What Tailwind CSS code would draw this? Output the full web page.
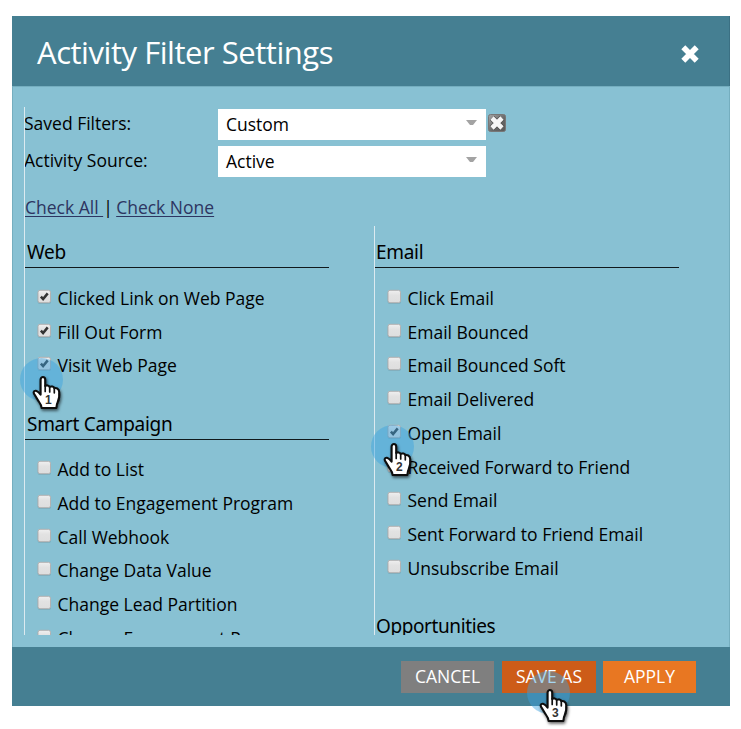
<!DOCTYPE html>
<html lang="en">
<head>
<meta charset="utf-8">
<title>Activity Filter Settings</title>
<script src="https://cdn.jsdelivr.net/npm/@tailwindcss/browser@4"></script>
</head>
<body class="bg-white overflow-hidden font-['Open_Sans',sans-serif] text-black">
<svg class="absolute size-0">
  <defs>
    <linearGradient id="boxFill" x1="0" y1="0" x2="0" y2="1"><stop offset="0" stop-color="#f0f0f0"/><stop offset=".4" stop-color="#e2e2e2"/><stop offset="1" stop-color="#dedede"/></linearGradient>
    <linearGradient id="clearFill" x1="0" y1="0" x2="1" y2="1"><stop offset="0" stop-color="#a5a5a5"/><stop offset=".6" stop-color="#666"/><stop offset="1" stop-color="#5a5a5a"/></linearGradient>
    <filter id="handShadow" x="-30%" y="-20%" width="180%" height="160%"><feDropShadow dx="1" dy="1.8" stdDeviation="1.4" flood-color="#000" flood-opacity=".6"/></filter>
    <symbol id="box" viewBox="0 0 15 16">
      <rect x=".6" y="2" width="13.400" height="13" rx="2.5" fill="#5c8c9c" opacity=".35"/>
      <rect x="1" y="1.300" width="12.500" height="12.400" rx="2" fill="url(#boxFill)" stroke="#b3b1b1"/>
    </symbol>
    <symbol id="tick" viewBox="0 0 15 16"><path d="M3.900 7.600 6.100 10.100 10.700 4.400" fill="none" stroke="currentColor" stroke-width="2.500"/></symbol>
    <symbol id="hand" viewBox="0 0 40 42">
      <path filter="url(#handShadow)" d="M9.600 6.600C9.600 3.200 14.200 3.200 14.200 6.600V13C15.200 12 18 12.200 18.600 14 20 13 22.800 13.500 23.300 15.200 25.300 14.500 28 16 28.200 19 28.600 23 28.200 26.500 26.600 29.500 25.800 31 25.500 33 25.300 35H10.600C10.400 31.800 8.800 29.800 7.200 27.600 5.500 25.200 4.500 22.800 2.900 20.600 2 18.600 3.800 17.200 5.600 18 7.200 18.600 8.400 20 9.600 21.600Z" fill="#fff" stroke="#0c0c0c" stroke-width="2.100" stroke-linejoin="round"/>
      <path d="M14.200 12.500v6M18.700 14v5M23.300 15.500v4.300" stroke="#111" stroke-width="1.700" stroke-linecap="round"/>
    </symbol>
  </defs>
</svg>
<div class="relative w-[741px] h-[729px] pt-4 pl-3">
  <div class="w-[718px] h-[690px] flex flex-col bg-[#88c1d3]">
    <header class="h-[70px] flex shrink-0 items-center justify-between bg-[#457f92] pl-[25px] pr-[29px] border-r border-[#3b7083]">
      <h1 class="text-[31px] leading-[40px] tracking-[-0.46px] text-white whitespace-nowrap pt-px">Activity Filter Settings</h1>
      <svg class="w-5 h-5 mt-[6px]" viewBox="0 0 20 20"><path d="M3.300 3.300 16.700 16.700M16.700 3.300 3.300 16.700" stroke="#fff" stroke-width="5.600"/></svg>
    </header>
    <main class="h-[561px] shrink-0 border-t border-x border-[#75aebf] pt-5 pl-[11px]">
      <div class="h-[528px] border-l border-[#dceaf0] overflow-hidden text-[17.5px] leading-[24px] whitespace-nowrap">
        <div class="flex pt-[2px] h-[33px]">
          <div class="w-[193px] pt-[2px]"><span class="-ml-px">Saved Filters:</span></div>
          <div class="w-[268px] h-[31px] bg-white flex justify-between pl-2 pr-[9px] pt-[3px]"><span>Custom</span><svg class="w-[11px] h-[6px] mt-[8px]" viewBox="0 0 11 6"><path d="M0 0h11L7 5H4z" fill="#a3a3a3"/></svg></div>
          <svg class="w-[18px] h-[18px] ml-[2px] mt-[5px]" viewBox="0 0 18 18"><rect x=".5" y=".5" width="17" height="17" rx="2" fill="url(#clearFill)" stroke="#777"/><path d="M4 4 14 14M14 4 4 14" stroke="#444" stroke-width="6"/><path d="M4 4 14 14M14 4 4 14" stroke="#f5f5f5" stroke-width="4.600"/></svg>
        </div>
        <div class="flex pt-[6px] h-[37px]">
          <div class="w-[193px] pt-[2px]"><span class="-ml-px">Activity Source:</span></div>
          <div class="w-[268px] h-[31px] bg-white flex justify-between pl-2 pr-[9px] pt-[3px]"><span>Active</span><svg class="w-[11px] h-[6px] mt-[8px]" viewBox="0 0 11 6"><path d="M0 0h11L7 5H4z" fill="#a3a3a3"/></svg></div>
        </div>
        <div class="h-[49px] pt-[18px] flex"><a class="underline decoration-1 text-[#2d3561] underline-offset-[2px] whitespace-pre">Check All </a><span class="w-[14px] text-center -ml-[2px] mr-px">|</span><a class="underline decoration-1 text-[#2d3561] underline-offset-[2px]">Check None</a></div>
        <div class="flex">
          <div class="w-[349px] pt-[7px]">
            <h2 class="w-[304px] h-[35px] pt-[6px] border-b border-[#10191c] pl-[2px] font-['Noto_Sans',sans-serif] text-[19px] leading-[26px] tracking-[-0.3px]">Web</h2>
            <ul class="pt-[12.75px] pl-3" data-list="+Clicked Link on Web Page|+Fill Out Form|*Visit Web Page"></ul>
            <h2 class="w-[304px] h-[35px] mt-[23px] pt-[6px] border-b border-[#10191c] pl-[2px] font-['Noto_Sans',sans-serif] text-[19px] leading-[26px] tracking-[-0.3px]">Smart Campaign</h2>
            <ul class="pt-[12px] pl-3" data-list="-Add to List|-Add to Engagement Program|-Call Webhook|-Change Data Value|-Change Lead Partition|-Change Engagement Program"></ul>
          </div>
          <div class="border-l border-[#dceaf0] pt-[7px]">
            <h2 class="w-[304px] h-[35px] pt-[6px] border-b border-[#10191c] pl-[1px] font-['Noto_Sans',sans-serif] text-[19px] leading-[26px] tracking-[-0.3px]">Email</h2>
            <ul class="pt-[12.75px] pl-3" data-list="-Click Email|-Email Bounced|-Email Bounced Soft|-Email Delivered|*Open Email|-Received Forward to Friend|-Send Email|-Sent Forward to Friend Email|-Unsubscribe Email"></ul>
            <h2 class="w-[304px] h-[35px] mt-[22.5px] pt-[6px] pl-[1px] font-['Noto_Sans',sans-serif] text-[19px] leading-[26px] tracking-[-0.4px]">Opportunities</h2>
          </div>
        </div>
      </div>
    </main>
    <footer class="h-[59px] shrink-0 bg-[#457f92] flex justify-end pt-[14px] pr-[34px] text-white text-[17.5px] leading-[30px] text-center whitespace-nowrap">
      <button class="w-[93px] h-8 pb-[2px] mr-2 bg-[#7f7f7f]">CANCEL</button>
      <button class="w-[94px] h-8 pb-[2px] mr-[7px] bg-[#cd5c18]">SAVE AS</button>
      <button class="w-[93px] h-8 pb-[2px] bg-[#e87722]">APPLY</button>
    </footer>
  </div>
  <div class="absolute left-[20px] top-[358px] size-[43px] rounded-full bg-[#39a2df]/45"></div>
  <div class="absolute left-[371px] top-[425px] size-[43px] rounded-full bg-[#39a2df]/45"></div>
  <div class="absolute left-[527px] top-[671px] size-[43px] rounded-full bg-[#39a2df]/45"></div>
  <div class="absolute left-[31px] top-[373px] w-10 h-[42px]"><svg class="w-10 h-[42px]" viewBox="0 0 40 42"><use href="#hand"/></svg><span class="absolute left-[14px] top-[19px] text-[12px] leading-4 font-['Liberation_Sans',sans-serif] font-bold text-[#333]">1</span></div>
  <div class="absolute left-[382px] top-[440px] w-10 h-[42px]"><svg class="w-10 h-[42px]" viewBox="0 0 40 42"><use href="#hand"/></svg><span class="absolute left-[14px] top-[19px] text-[12px] leading-4 font-['Liberation_Sans',sans-serif] font-bold text-[#333]">2</span></div>
  <div class="absolute left-[538px] top-[686px] w-10 h-[42px]"><svg class="w-10 h-[42px]" viewBox="0 0 40 42"><use href="#hand"/></svg><span class="absolute left-[14px] top-[19px] text-[12px] leading-4 font-['Liberation_Sans',sans-serif] font-bold text-[#333]">3</span></div>
</div>
<script>
// Each entry is prefixed with its state: "-" unchecked, "+" or "*" checked.
document.querySelectorAll('[data-list]').forEach(function (ul) {
  ul.innerHTML = ul.dataset.list.split('|').map(function (s) {
    var tick = s[0] === '-' ? '' : '<use href="#tick"/>';
    return '<li class="flex h-[33.75px] pt-[5px]"><svg class="w-[15px] h-4 mt-[3px] shrink-0 text-[#333]"><use href="#box"/>' + tick + '</svg><span class="pl-[5.5px]">' + s.slice(1) + '</span></li>';
  }).join('');
});
</script>
</body>
</html>
